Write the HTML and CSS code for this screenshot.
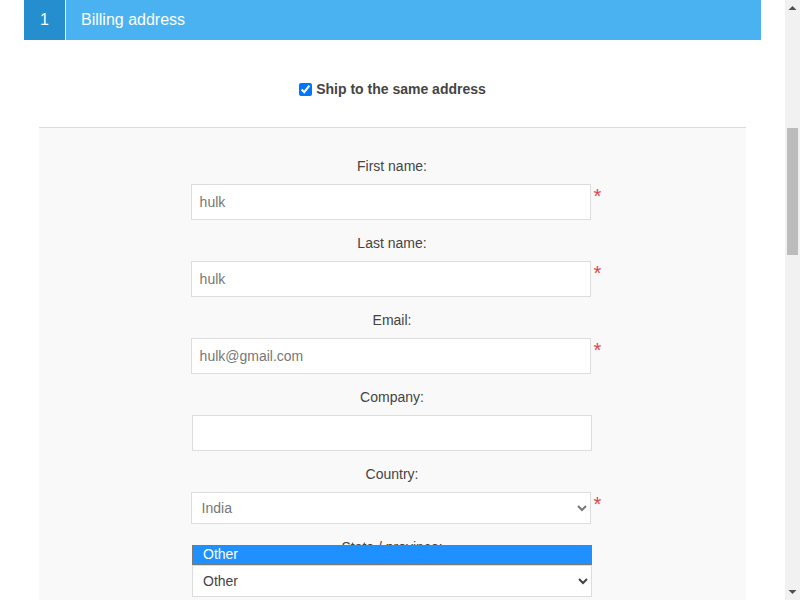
FILE: index.html
```html
<!DOCTYPE html>
<html lang="en">
<head>
<meta charset="utf-8">
<title>Checkout</title>
<link rel="stylesheet" href="styles.css">
</head>
<body>
<div class="window">
  <main class="viewport">
    <ol class="opc">
      <li class="tab allow">
        <div class="step-title"><span class="number">1</span><h2 class="title">Billing address</h2></div>
        <div class="step">
          <div class="same-address">
            <input type="checkbox" id="ShipToSameAddress" checked>
            <label for="ShipToSameAddress">Ship to the same address</label>
          </div>
          <div class="edit-address">
            <div class="inputs">
              <label for="FirstName">First name:</label>
              <div class="field"><input class="text" type="text" id="FirstName" value="hulk"><span class="required">*</span></div>
            </div>
            <div class="inputs">
              <label for="LastName">Last name:</label>
              <div class="field"><input class="text" type="text" id="LastName" value="hulk"><span class="required">*</span></div>
            </div>
            <div class="inputs">
              <label for="Email">Email:</label>
              <div class="field"><input class="text" type="text" id="Email" value="hulk@gmail.com"><span class="required">*</span></div>
            </div>
            <div class="inputs">
              <label for="Company">Company:</label>
              <div class="field"><input class="text" type="text" id="Company" value=""></div>
            </div>
            <div class="inputs">
              <label for="Country">Country:</label>
              <div class="field">
                <select class="select" id="Country"><option>India</option></select><span class="required">*</span>
              </div>
            </div>
            <div class="inputs">
              <label for="State">State / province:</label>
              <div class="field">
                <span class="select-wrap">
                  <span class="dropdown"><span class="option">Other</span></span>
                  <select class="select dark" id="State"><option>Other</option></select>
                </span>
              </div>
            </div>
          </div>
        </div>
      </li>
    </ol>
  </main>
  <div class="scrollbar" aria-hidden="true">
    <div class="sb-btn">
      <svg width="15" height="15" viewBox="0 0 15 15"><polygon points="3.5,10 11.5,10 7.5,6" fill="#505050"/></svg>
    </div>
    <div class="sb-track">
      <div class="sb-space"></div>
      <div class="sb-thumb"></div>
    </div>
    <div class="sb-btn">
      <svg width="15" height="15" viewBox="0 0 15 15"><polygon points="3.5,5 11.5,5 7.5,9" fill="#505050"/></svg>
    </div>
  </div>
</div>
</body>
</html>
```

FILE: styles.css
```css
html, body {
  margin: 0;
  padding: 0;
}

body {
  font-family: "Liberation Sans", Arial, sans-serif;
  font-size: 14px;
  color: #444;
  background: #fff;
}

.window {
  display: flex;
  width: 800px;
  height: 600px;
  overflow: hidden;
}

.viewport {
  flex: 1;
  min-width: 0;
  height: 600px;
  overflow: hidden;
}

/* scrollbar */
.scrollbar {
  display: flex;
  flex-direction: column;
  width: 15px;
  flex-shrink: 0;
  background: #f1f1f1;
}

.sb-btn {
  height: 15px;
  line-height: 0;
}

.sb-track {
  flex: 1;
  display: flex;
  flex-direction: column;
}

.sb-space {
  height: 113px;
}

.sb-thumb {
  height: 127px;
  margin: 0 2px;
  background: #bcbcbc;
}

/* checkout */
.opc {
  list-style: none;
  margin: 0 24px;
  padding: 0;
}

.step-title {
  display: flex;
  height: 40px;
  margin-bottom: 1px;
  background: #4ab2f1;
  color: #fff;
  font-size: 16px;
  line-height: 40px;
}

.number {
  width: 41px;
  border-right: 1px solid #fff;
  background: #248ece;
  text-align: center;
}

.title {
  margin: 0;
  padding-left: 15px;
  font-size: 16px;
  font-weight: normal;
  line-height: 40px;
}

.step {
  margin: 11px 0 0;
  padding: 30px 15px 0;
}

.same-address {
  display: flex;
  justify-content: center;
  align-items: center;
  margin-bottom: 30px;
  font-weight: bold;
  line-height: 16px;
}

.same-address input {
  width: 13px;
  height: 13px;
  margin: 0 4px 0 0;
}

.edit-address {
  border-top: 1px solid #ddd;
  padding: 30px 16px 30px 15px;
  background: #f9f9f9;
}

.inputs {
  margin-bottom: 15px;
}

.inputs label {
  display: block;
  margin-bottom: 10px;
  line-height: 16px;
  text-align: center;
  color: #444;
}

.field {
  display: flex;
  justify-content: center;
  align-items: flex-start;
}

.text {
  width: 400px;
  height: 36px;
  box-sizing: border-box;
  margin: 0;
  border: 1px solid #ddd;
  border-radius: 0;
  padding: 0 8px;
  font: 14px "Liberation Sans", Arial, sans-serif;
  color: #777;
  background: #fff;
  outline: none;
}

.select {
  display: block;
  width: 400px;
  height: 32px;
  box-sizing: border-box;
  margin: 0;
  border: 1px solid #ddd;
  border-radius: 0;
  padding: 6px;
  font: 14px "Liberation Sans", Arial, sans-serif;
  color: #777;
  background: #fff;
}

.select.dark {
  color: #444;
}

.required {
  margin: 0 -8px 0 3px;
  font-size: 20px;
  line-height: 24px;
  color: #e4434b;
}

.select-wrap {
  position: relative;
  display: block;
}

.dropdown {
  position: absolute;
  left: 0;
  right: 0;
  bottom: 100%;
  height: 20px;
  box-sizing: border-box;
  border: 1px solid #7a7a7a;
  background: #1e90ff;
}

.option {
  display: block;
  padding-left: 10px;
  font-size: 14px;
  line-height: 17px;
  color: #fff;
}
```
